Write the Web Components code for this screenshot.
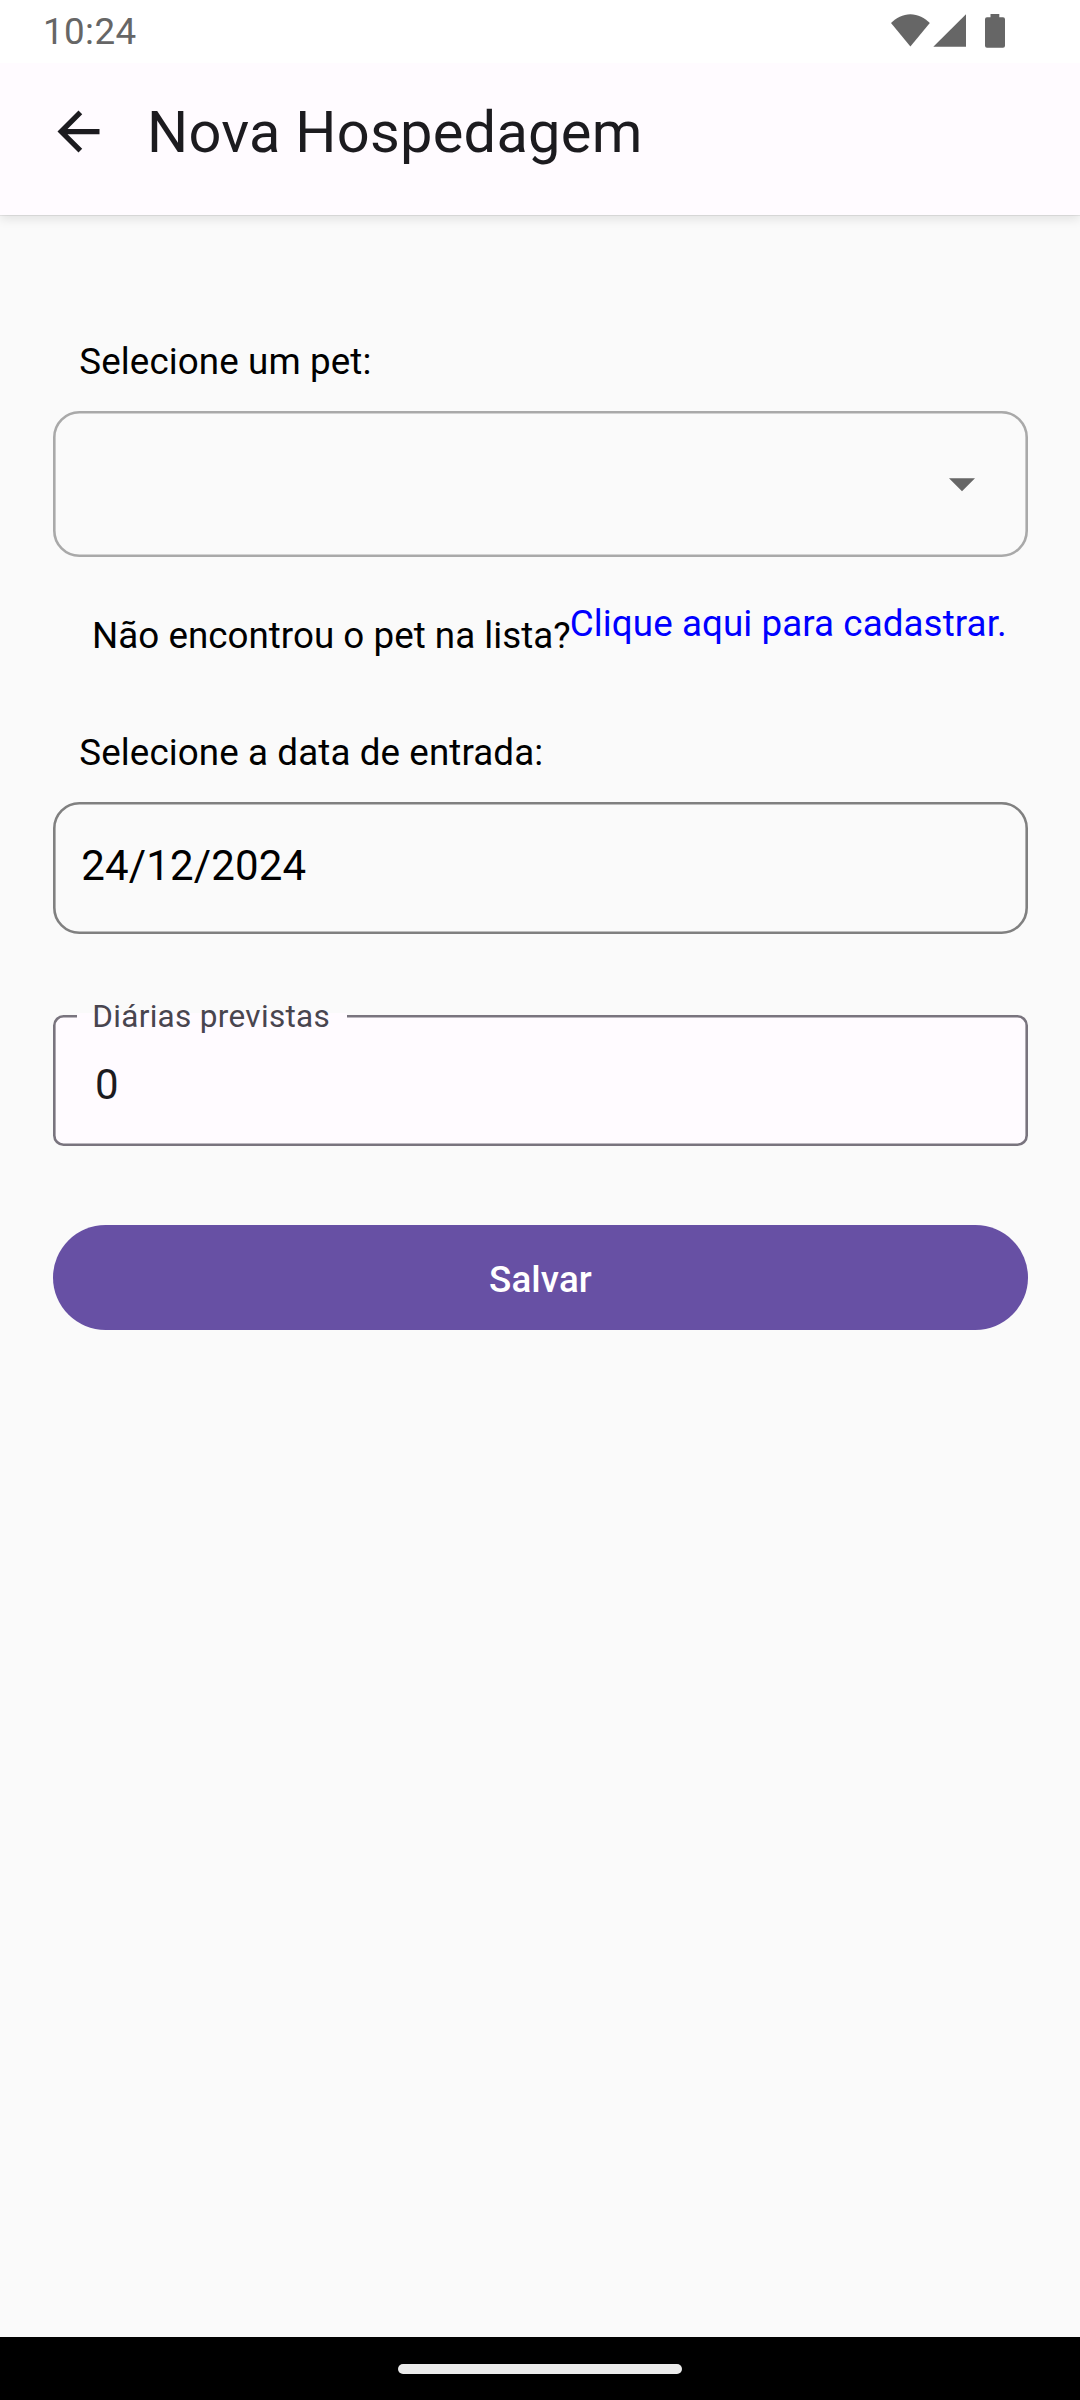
<!DOCTYPE html>
<html lang="pt-BR">
<head>
<meta charset="utf-8">
<title>Nova Hospedagem</title>
<style>
html, body { margin: 0; background: #fafafa; }
body { font-family: Roboto, "Noto Sans", sans-serif; }
</style>
</head>
<body>
<pet-app>
  <status-bar slot="status">10:24</status-bar>
  <app-bar slot="header">Nova Hospedagem</app-bar>
  <form-label>Selecione um pet:</form-label>
  <outlined-box dropdown style="--box-height:146px;--line:#a9a9a9"></outlined-box>
  <hint-row>Não encontrou o pet na lista?<span slot="link">Clique aqui para cadastrar.</span></hint-row>
  <form-label>Selecione a data de entrada:</form-label>
  <outlined-box style="--box-height:132px;--line:#808080">24/12/2024</outlined-box>
  <text-field label="Diárias previstas">0</text-field>
  <primary-button>Salvar</primary-button>
  <nav-bar slot="footer"></nav-bar>
</pet-app>
<script>
const define = (name, html, setup) => customElements.define(name, class extends HTMLElement {
  constructor() {
    super();
    const root = this.attachShadow({ mode: 'open' });
    const template = document.createElement('template');
    template.innerHTML = html;
    root.append(template.content.cloneNode(true));
    if (setup) setup(this, root);
  }
});

define('pet-app', `<style>
  :host { display: flex; flex-direction: column; width: 1080px; height: 2400px; background: #fafafa; overflow: hidden; color: #000; }
  main { flex: 1; display: flex; flex-direction: column; padding: 125px 52px 0 53px; }
</style>
<slot name="status"></slot><slot name="header"></slot><main><slot></slot></main><slot name="footer"></slot>`);

define('status-bar', `<style>
  :host { display: flex; justify-content: space-between; position: relative; z-index: 2; height: 63px; flex: none; background: #fff; color: #666; font-size: 36.75px; letter-spacing: .4px; box-sizing: border-box; padding: 10px 75px 0 43px; }
  svg { display: block; margin-top: 4px; }
</style>
<span><slot></slot></span>
<svg width="114" height="34" viewBox="0 0 114 34" fill="#666" style="margin-left:auto">
  <path d="M0 9C5 3.7 12 .2 19.4 .2S33.8 3.7 38.8 9L19.4 32.5Z"/>
  <path d="M75 .3V32.8H42.3Z"/>
  <path d="M99.5 0H108.3V3.3H112Q114 3.3 114 5.3V31.8Q114 33.8 112 33.8H96Q94 33.8 94 31.8V5.3Q94 3.3 96 3.3H99.5Z"/>
</svg>`);

define('app-bar', `<style>
  :host { display: flex; height: 152px; flex: none; box-sizing: border-box; background: #fffbff; color: #1c1b1f; padding: 35px 0 0 47.3px; position: relative; z-index: 1; box-shadow: 0 1px 0 rgba(0,0,0,.07), 0 4px 10px rgba(0,0,0,.1); }
  svg { width: 63px; height: 63px; margin-top: 2px; }
  span { font-size: 57.75px; letter-spacing: .263px; margin-left: 36.7px; }
</style>
<svg viewBox="0 0 24 24" fill="#1c1b1f"><path d="M20 11H7.83l5.59-5.59L12 4l-8 8 8 8 1.41-1.41L7.83 13H20z"/></svg>
<span><slot></slot></span>`);

define('form-label', `<style>
  :host { display: block; height: 43px; font-size: 36.75px; letter-spacing: .1px; padding-left: 26.3px; margin-bottom: 28px; }
</style><slot></slot>`);

define('outlined-box', `<style>
  :host { display: grid; height: var(--box-height); font-size: 42px; letter-spacing: .157px; }
  svg, span { grid-area: 1 / 1; }
  span { padding: 39px 0 0 28.2px; }
  .frame { width: 975px; height: 100%; }
  .frame rect { width: calc(100% - 2.6px); height: calc(100% - 2.6px); fill: none; stroke: var(--line); stroke-width: 2.6px; }
  .caret { display: none; width: 26px; height: 13.5px; margin: 67px 0 0 896px; }
  :host([dropdown]) .caret { display: block; }
</style>
<svg class="frame"><rect x="1.3" y="1.3" rx="25"/></svg>
<span><slot></slot></span>
<svg class="caret" viewBox="0 0 26 13.5"><path d="M0 .2H26L13 13.3Z" fill="#666"/></svg>`);

define('hint-row', `<style>
  :host { display: flex; height: 55px; margin: 45px 0 74px; padding-left: 39px; font-size: 36.75px; white-space: nowrap; }
  .ask { margin-top: 12px; width: 477.8px; letter-spacing: .025px; }
  .go { color: #00f; letter-spacing: .08px; }
</style>
<span class="ask"><slot></slot></span><span class="go"><slot name="link"></slot></span>`);

define('text-field', `<style>
  :host { display: grid; height: 131px; margin-top: 81px; position: relative; color: #1c1b1f; font-size: 42px; }
  svg, .value { grid-area: 1 / 1; }
  svg { width: 975px; height: 100%; }
  rect { width: calc(100% - 2.6px); height: calc(100% - 2.6px); fill: #fffbff; stroke: #79747e; stroke-width: 2.6px; }
  .value { padding: 45px 0 0 42px; }
  .label { position: absolute; left: 24px; top: -17px; width: 270px; height: 37px; box-sizing: border-box; padding-left: 15.2px; font-size: 31.5px; letter-spacing: .325px; color: #49454f; background: linear-gradient(transparent 15px, #fffbff 15px); white-space: nowrap; }
</style>
<svg><rect x="1.3" y="1.3" rx="9.2"/></svg>
<span class="value"><slot></slot></span><span class="label"></span>`,
  (host, root) => { root.querySelector('.label').textContent = host.getAttribute('label'); });

define('primary-button', `<style>
  :host { display: flex; align-items: center; justify-content: center; height: 105px; box-sizing: border-box; padding-top: 4px; margin-top: 79px; border-radius: 52.5px; background: #6750a4; color: #fff; font-size: 36.75px; font-weight: 500; letter-spacing: .12px; }
</style><slot></slot>`);

define('nav-bar', `<style>
  :host { display: flex; justify-content: center; height: 63px; flex: none; box-sizing: border-box; padding-top: 27px; background: #000; }
  i { width: 284px; height: 10px; border-radius: 5px; background: #ebebeb; }
</style><i></i>`);
</script>
</body>
</html>
